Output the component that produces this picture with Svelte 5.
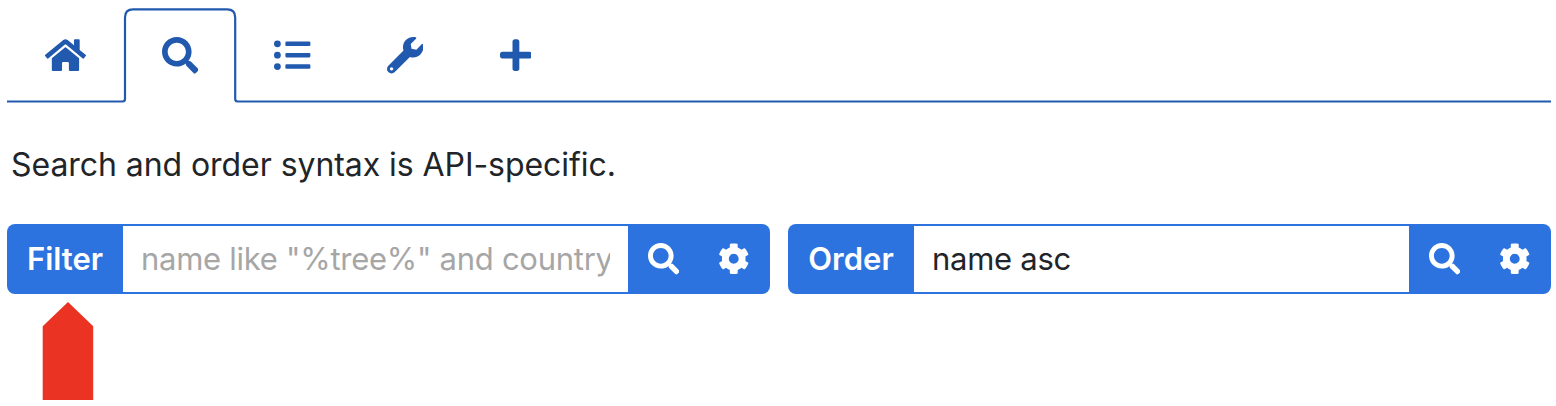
<script>
  const icons = {
    home: { w: 576, d: 'M280.37 148.26L96 300.11V464a16 16 0 0 0 16 16l112.06-.29a16 16 0 0 0 15.92-16V368a16 16 0 0 1 16-16h64a16 16 0 0 1 16 16v95.64a16 16 0 0 0 16 16.05L464 480a16 16 0 0 0 16-16V300L295.67 148.26a12.19 12.19 0 0 0-15.3 0zM571.6 251.47L488 182.56V44.05a12 12 0 0 0-12-12h-56a12 12 0 0 0-12 12v72.61L318.47 43a48 48 0 0 0-61 0L4.34 251.47a12 12 0 0 0-1.6 16.9l25.5 31A12 12 0 0 0 45.15 301l235.22-193.74a12.19 12.19 0 0 1 15.3 0L530.9 301a12 12 0 0 0 16.9-1.6l25.5-31a12 12 0 0 0-1.7-16.93z' },
    search: { w: 512, d: 'M505 442.7L405.3 343c-4.5-4.5-10.6-7-17-7H372c27.6-35.3 44-79.7 44-128C416 93.1 322.9 0 208 0S0 93.1 0 208s93.1 208 208 208c48.3 0 92.7-16.4 128-44v16.3c0 6.4 2.5 12.5 7 17l99.7 99.7c9.4 9.4 24.6 9.4 33.9 0l28.3-28.3c9.4-9.4 9.4-24.6.1-34zM208 336c-70.7 0-128-57.2-128-128 0-70.7 57.2-128 128-128 70.7 0 128 57.2 128 128 0 70.7-57.2 128-128 128z' },
    list: { w: 512, d: 'M48 48a48 48 0 1 0 48 48 48 48 0 0 0-48-48zm0 160a48 48 0 1 0 48 48 48 48 0 0 0-48-48zm0 160a48 48 0 1 0 48 48 48 48 0 0 0-48-48zm448 16H176a16 16 0 0 0-16 16v32a16 16 0 0 0 16 16h320a16 16 0 0 0 16-16v-32a16 16 0 0 0-16-16zm0-320H176a16 16 0 0 0-16 16v32a16 16 0 0 0 16 16h320a16 16 0 0 0 16-16V80a16 16 0 0 0-16-16zm0 160H176a16 16 0 0 0-16 16v32a16 16 0 0 0 16 16h320a16 16 0 0 0 16-16v-32a16 16 0 0 0-16-16z' },
    wrench: { w: 512, d: 'M507.73 109.1c-2.24-9.03-13.54-12.09-20.12-5.51l-74.36 74.36-67.88-11.31-11.31-67.88 74.36-74.36c6.62-6.62 3.43-17.9-5.66-20.16-47.38-11.74-99.55.91-136.58 37.93-39.64 39.64-50.55 97.1-34.05 147.2L18.74 402.76c-24.99 24.99-24.99 65.51 0 90.5 24.99 24.99 65.51 24.99 90.5 0l213.21-213.21c50.12 16.71 107.47 5.68 147.37-34.22 37.07-37.07 49.7-89.32 37.91-136.73zM64 472c-13.25 0-24-10.75-24-24 0-13.26 10.75-24 24-24s24 10.74 24 24c0 13.25-10.75 24-24 24z' },
    plus: { w: 448, d: 'M416 208H272V64c0-17.67-14.33-32-32-32h-32c-17.67 0-32 14.33-32 32v144H32c-17.67 0-32 14.33-32 32v32c0 17.67 14.33 32 32 32h144v144c0 17.67 14.33 32 32 32h32c17.67 0 32-14.33 32-32V304h144c17.67 0 32-14.33 32-32v-32c0-17.67-14.33-32-32-32z' },
    cog: { w: 512, d: 'M487.4 315.7l-42.6-24.6c4.3-23.2 4.3-47 0-70.2l42.6-24.6c4.9-2.8 7.1-8.6 5.5-14-11.1-35.6-30-67.8-54.7-94.6-3.8-4.1-10-5.1-14.8-2.3L380.8 110c-17.9-15.4-38.5-27.3-60.8-35.1V25.8c0-5.6-3.9-10.5-9.4-11.7-36.7-8.2-74.3-7.8-109.2 0-5.5 1.2-9.4 6.1-9.4 11.7V75c-22.2 7.9-42.8 19.8-60.8 35.1L88.7 85.5c-4.9-2.8-11-1.9-14.8 2.3-24.7 26.7-43.6 58.9-54.7 94.6-1.7 5.4.6 11.2 5.5 14L67.3 221c-4.3 23.2-4.3 47 0 70.2l-42.6 24.6c-4.9 2.8-7.1 8.6-5.5 14 11.1 35.6 30 67.8 54.7 94.6 3.8 4.1 10 5.1 14.8 2.3l42.6-24.6c17.9 15.4 38.5 27.3 60.8 35.1v49.2c0 5.6 3.9 10.5 9.4 11.7 36.7 8.2 74.3 7.8 109.2 0 5.5-1.2 9.4-6.1 9.4-11.7v-49.2c22.2-7.9 42.8-19.8 60.8-35.1l42.6 24.6c4.9 2.8 11 1.9 14.8-2.3 24.7-26.7 43.6-58.9 54.7-94.6 1.5-5.5-.7-11.3-5.6-14.1zM256 336c-44.1 0-80-35.9-80-80s35.9-80 80-80 80 35.9 80 80-35.9 80-80 80z' }
  };
  const tabs = ['home', 'search', 'list', 'wrench', 'plus'];
  let filter = $state('');
  let order = $state('name asc');
</script>

{#snippet icon(name)}
  <svg class="icon" viewBox="0 0 {icons[name].w} 512" aria-hidden="true"><path d={icons[name].d} /></svg>
{/snippet}

<main>
  <nav>
    <svg class="outline" viewBox="0 0 1544 104" aria-hidden="true">
      <path d="M0 101.5H115.5Q118 101.5 118 99V17.4Q118 9.4 126 9.4H220.2Q228.2 9.4 228.2 17.4V99Q228.2 101.5 230.7 101.5H1544" />
    </svg>
    {#each tabs as name}
      <button class="tab {name}">{@render icon(name)}</button>
    {/each}
  </nav>

  <p>Search and order syntax is API-specific.</p>

  <div class="groups">
    <div class="group filter">
      <label for="filter">Filter</label>
      <input id="filter" bind:value={filter} placeholder={'name like "%tree%" and country like "%land%"'} />
      <button>{@render icon('search')}</button>
      <button>{@render icon('cog')}</button>
    </div>
    <div class="group order">
      <label for="order">Order</label>
      <input id="order" bind:value={order} />
      <button>{@render icon('search')}</button>
      <button>{@render icon('cog')}</button>
    </div>
  </div>

  <svg class="marker" viewBox="0 0 52 98" aria-hidden="true"><path d="M.7 24.2L26 0 51.2 24.2V98H.7z" /></svg>
</main>

<style>
  :global(body) { background: #fff; }
  main {
    box-sizing: border-box;
    height: 406px;
    padding: 0 5px 0 7px;
    overflow: hidden;
    font-family: Inter, "Liberation Sans", sans-serif;
    color: #212529;
  }
  button { border: 0; padding: 0; background: none; color: inherit; display: flex; align-items: center; justify-content: center; }
  .icon { display: block; height: 1em; fill: currentColor; }
  nav { position: relative; display: flex; height: 104px; padding-left: 2px; box-sizing: border-box; }
  .outline { position: absolute; left: 0; top: 0; width: 1544px; height: 104px; fill: none; stroke: #2159ae; stroke-width: 2.2; }
  .tab { height: 110.8px; font-size: 36.4px; color: #2159ae; }
  .home { width: 113px; }
  .search { width: 116px; }
  .list { width: 109px; }
  .wrench { width: 116px; }
  .plus { width: 105px; }
  p { margin: 38px 0 0 4px; height: 46px; line-height: 46px; font-size: 32px; letter-spacing: -0.06px; white-space: nowrap; }
  .groups { display: flex; gap: 18px; margin-top: 36px; }
  .group {
    display: flex;
    box-sizing: border-box;
    width: 763px;
    height: 70px;
    padding: 2px 0;
    border-radius: 8px;
    background: #2d73df;
    color: #fff;
  }
  label { display: flex; align-items: center; justify-content: center; box-sizing: border-box; width: 116px; padding-bottom: 2px; font-size: 31px; font-weight: 600; }
  .order label { width: 126px; }
  input {
    box-sizing: border-box;
    flex: 1;
    min-width: 0;
    padding: 0 18px 2px;
    border: 0;
    border-radius: 0;
    outline: 0;
    background: #fff;
    color: #212529;
    font: inherit;
    font-size: 31px;
    letter-spacing: -0.27px;
  }
  input::placeholder { color: #a6a6a6; opacity: 1; }
  .group button { width: 71px; font-size: 31.5px; }
  .group button + button { width: 71px; padding-right: 2px; }
  .marker { display: block; width: 52px; height: 98px; margin: 8px 0 0 35px; fill: #ea3323; }
</style>
